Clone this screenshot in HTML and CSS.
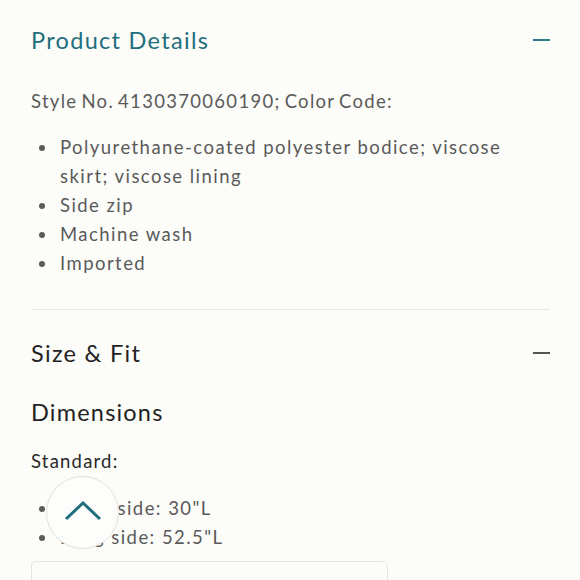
FILE: index.html
```html
<!DOCTYPE html>
<html>
<head>
<meta charset="utf-8">
<link rel="stylesheet" href="styles.css">
</head>
<body>
<div class="page">
  <section class="acc">
    <div class="acc-head">
      <h2 class="acc-title teal">Product Details</h2>
      <span class="dash teal-bg"></span>
    </div>
    <p class="style-no">Style No.&nbsp;4130370060190;&nbsp;Color Code:</p>
    <ul class="list">
      <li>Polyurethane-coated polyester bodice; viscose skirt; viscose lining</li>
      <li>Side zip</li>
      <li>Machine wash</li>
      <li>Imported</li>
    </ul>
  </section>
  <hr class="divider">
  <section class="acc">
    <div class="acc-head second">
      <h2 class="acc-title">Size &amp; Fit</h2>
      <span class="dash dark-bg"></span>
    </div>
    <h3 class="dim">Dimensions</h3>
    <p class="std">Standard:</p>
    <ul class="list list2">
      <li>Short side: 30"L</li>
      <li>Long side: 52.5"L</li>
    </ul>
    <div class="box"></div>
  </section>
</div>
<button class="totop" aria-label="Back to top">
  <svg width="38" height="22" viewBox="0 0 38 22"><path d="M2 20 L19 4 L36 20" fill="none" stroke="#1f6e7e" stroke-width="3"/></svg>
</button>
</body>
</html>
```
FILE: styles.css
```css
html, body { margin: 0; padding: 0; }
body {
  background: #fcfcf9;
  font-family: Lato, "Open Sans", sans-serif;
  color: #555;
  width: 580px;
  height: 580px;
  overflow: hidden;
  position: relative;
}
.page { padding: 0 30px 0 31px; }
.acc-head {
  display: flex;
  align-items: center;
  justify-content: space-between;
  height: 40px;
  padding-top: 20px;
}
.acc-head.second { padding-top: 23px; height: 40px; }
.acc-title {
  margin: 0;
  font-size: 23.5px;
  font-weight: 400;
  letter-spacing: 1.3px;
  color: #222;
}
.acc-title.teal { color: #1f6e7e; }
.dash { width: 17px; height: 1.5px; display: block; }
.teal-bg { background: #2b7a8a; }
.dark-bg { background: #555; }
.style-no {
  margin: 30px 0 0;
  font-size: 18.5px;
  line-height: 22px;
  letter-spacing: 1.3px;
  color: #5a5a5a;
  word-spacing: -2px;
}
.list {
  margin: 21px 0 0;
  padding: 0;
  list-style: none;
  font-size: 18.5px;
  line-height: 29px;
  letter-spacing: 1.45px;
  color: #5a5a5a;
}
.list li { padding-left: 29px; }
.list li::before {
  content: "";
  display: inline-block;
  width: 6px;
  height: 6px;
  border-radius: 50%;
  background: #5a5a5a;
  margin-left: -21px;
  margin-right: 15px;
  vertical-align: middle;
  position: relative;
  top: -1px;
}
.divider {
  border: 0;
  border-top: 1.5px solid #e6e6e2;
  margin: 31px 0 0;
}
.dim {
  margin: 24px 0 0;
  font-size: 23.5px;
  font-weight: 400;
  letter-spacing: 1.2px;
  color: #222;
  line-height: 30px;
}
.std {
  margin: 23px 0 0;
  font-size: 18.5px;
  line-height: 22px;
  letter-spacing: 1.2px;
  color: #2a2a2a;
}
.list2 { margin-top: 22px; }
.box {
  margin-top: 9px;
  width: 357px;
  height: 40px;
  border: 1.5px solid #e4e4e0;
  border-radius: 5px;
  box-sizing: border-box;
}
.totop {
  position: absolute;
  left: 46px;
  top: 476px;
  width: 73px;
  height: 73px;
  border-radius: 50%;
  background: #fdfdfb;
  border: 1.5px solid #e0e0dc;
  display: flex;
  align-items: center;
  justify-content: center;
  padding: 0;
}
.totop svg { margin-top: -6px; }
```
